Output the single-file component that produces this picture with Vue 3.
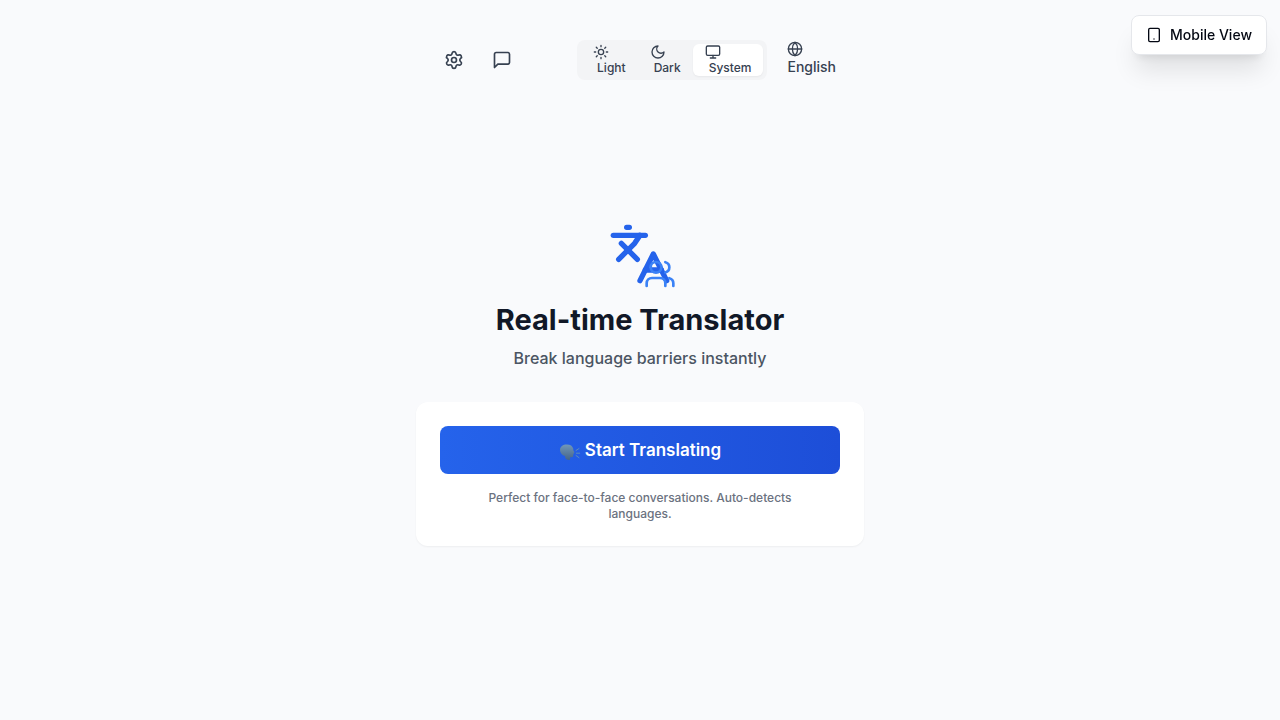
<script setup>
import { ref } from 'vue'

const theme = ref('system')
const themes = [
  { id: 'light', label: 'Light' },
  { id: 'dark', label: 'Dark' },
  { id: 'system', label: 'System' }
]
</script>

<template>
  <div class="page">
    <button type="button" class="mobile-view">
      <svg class="icon-sm" viewBox="0 0 24 24" aria-hidden="true">
        <rect width="16" height="20" x="4" y="2" rx="2" />
        <path d="M12 18h.01" />
      </svg>
      <span>Mobile View</span>
    </button>

    <header class="toolbar">
      <div class="tools">
        <button type="button" class="tool" aria-label="Settings">
          <svg class="icon-md" viewBox="0 0 24 24" aria-hidden="true">
            <path d="M9.671 4.136a2.34 2.34 0 0 1 4.659 0 2.34 2.34 0 0 0 3.319 1.915 2.34 2.34 0 0 1 2.33 4.033 2.34 2.34 0 0 0 0 3.831 2.34 2.34 0 0 1-2.33 4.033 2.34 2.34 0 0 0-3.319 1.915 2.34 2.34 0 0 1-4.659 0 2.34 2.34 0 0 0-3.32-1.915 2.34 2.34 0 0 1-2.33-4.033 2.34 2.34 0 0 0 0-3.831A2.34 2.34 0 0 1 6.35 6.051a2.34 2.34 0 0 0 3.319-1.915" />
            <circle cx="12" cy="12" r="3" />
          </svg>
        </button>
        <button type="button" class="tool" aria-label="Messages">
          <svg class="icon-md" viewBox="0 0 24 24" aria-hidden="true">
            <path d="M21 15a2 2 0 0 1-2 2H7l-4 4V5a2 2 0 0 1 2-2h14a2 2 0 0 1 2 2z" />
          </svg>
        </button>
      </div>

      <div class="preferences">
        <div class="themes" role="group" aria-label="Theme">
          <button
            v-for="item in themes"
            :key="item.id"
            type="button"
            class="theme"
            :class="{ active: theme === item.id }"
            :aria-pressed="theme === item.id"
            @click="theme = item.id"
          >
            <svg class="icon-sm" viewBox="0 0 24 24" aria-hidden="true">
              <template v-if="item.id === 'light'">
                <circle cx="12" cy="12" r="4" />
                <path d="M12 2v2M12 20v2M4.93 4.93l1.41 1.41M17.66 17.66l1.41 1.41M2 12h2M20 12h2M6.34 17.66l-1.41 1.41M19.07 4.93l-1.41 1.41" />
              </template>
              <path v-else-if="item.id === 'dark'" d="M12 3a6 6 0 0 0 9 9 9 9 0 1 1-9-9Z" />
              <template v-else>
                <rect width="20" height="14" x="2" y="3" rx="2" />
                <path d="M8 21h8M12 17v4" />
              </template>
            </svg>
            <span class="theme-label">{{ item.label }}</span>
          </button>
        </div>
        <button type="button" class="language">
          <svg class="icon-sm" viewBox="0 0 24 24" aria-hidden="true">
            <circle cx="12" cy="12" r="10" />
            <path d="M12 2a14.5 14.5 0 0 0 0 20 14.5 14.5 0 0 0 0-20M2 12h20" />
          </svg>
          <span>English</span>
        </button>
      </div>
    </header>

    <main class="main">
      <div class="logo">
        <svg class="logo-languages" viewBox="0 0 24 24" aria-hidden="true">
          <path d="m5 8 6 6" />
          <path d="m4 14 6-6 2-3" />
          <path d="M2 5h12" />
          <path d="M7 2h1" />
          <path d="m22 22-5-10-5 10" />
          <path d="M14 18h6" />
        </svg>
        <svg class="logo-users" viewBox="0 0 24 24" aria-hidden="true">
          <path d="M16 21v-2a4 4 0 0 0-4-4H6a4 4 0 0 0-4 4v2" />
          <circle cx="9" cy="7" r="4" />
          <path d="M22 21v-2a4 4 0 0 0-3-3.87" />
          <path d="M16 3.13a4 4 0 0 1 0 7.75" />
        </svg>
      </div>
      <h1>Real-time Translator</h1>
      <p class="tagline">Break language barriers instantly</p>

      <section class="card">
        <button type="button" class="start">
          <svg class="speaking" viewBox="0 0 22 18" aria-hidden="true">
            <defs>
              <linearGradient id="head" x1="0" y1="0" x2="0" y2="1">
                <stop offset="0" stop-color="#7197b8" />
                <stop offset="1" stop-color="#456589" />
              </linearGradient>
            </defs>
            <path fill="url(#head)" d="M1 7C1 3.500 4 1.500 7.800 1.500c3.600 0 5.800 1.600 6.400 4.100l.2 1.900 1.200 1.700-.9.700.1 1.200-.7.600.1 1.700c-.3.800-1.400.8-2.800.7L11 16.700c-1.800.5-3.600-.1-4.500-1.200L6 13C3 12.300 1 10 1 7Z" />
            <path class="voice" d="m17 7.500 3-2M17.300 10.200h3.400M17 12.500l3 2.200" />
          </svg>
          <span>Start Translating</span>
        </button>
        <p class="hint">Perfect for face-to-face conversations. Auto-detects languages.</p>
      </section>
    </main>
  </div>
</template>

<style>
body {
  background: #f9fafb;
}
</style>

<style scoped>
.page {
  box-sizing: border-box;
  display: flex;
  flex-direction: column;
  align-items: center;
  min-height: 100vh;
  padding: 40px 16px;
  background: #f9fafc;
  color: #111827;
  font-family: Inter, "Liberation Sans", sans-serif;
}

h1,
p {
  margin: 0;
}

button {
  border: 0;
  margin: 0;
  background: transparent;
  color: #374151;
  font-family: inherit;
  font-weight: 500;
  cursor: pointer;
}

svg {
  display: block;
  fill: none;
  stroke: currentColor;
  stroke-width: 2;
  stroke-linecap: round;
  stroke-linejoin: round;
}

.icon-sm {
  width: 16px;
  height: 16px;
}

.icon-md {
  width: 20px;
  height: 20px;
}

.mobile-view {
  position: fixed;
  top: 15px;
  right: 13px;
  display: flex;
  align-items: center;
  gap: 8px;
  height: 40px;
  padding: 0 14px;
  border: 1px solid #e5e7eb;
  border-radius: 8px;
  background: #fff;
  color: #030712;
  font-size: 14px;
  line-height: 20px;
  box-shadow: 0 20px 25px -5px rgb(0 0 0 / 0.1), 0 8px 10px -6px rgb(0 0 0 / 0.1);
}

.toolbar {
  display: flex;
  align-items: center;
  justify-content: space-between;
  width: 100%;
  max-width: 416px;
  margin-bottom: 8px;
}

.tools {
  display: flex;
  gap: 4px;
}

.tool {
  padding: 8px 12px;
}

.preferences {
  display: flex;
  align-items: center;
  gap: 8px;
}

.themes {
  display: flex;
  padding: 4px;
  border-radius: 8px;
  background: #f3f4f6;
}

.theme {
  padding: 0 12px;
  border-radius: 6px;
  font-size: 12px;
  line-height: 16px;
}

.theme.active {
  background: #fff;
  box-shadow: 0 1px 2px rgb(0 0 0 / 0.05);
}

.theme-label {
  display: block;
  margin-left: 4px;
}

.language {
  padding: 0 12px 2px;
  font-size: 14px;
  line-height: 20px;
}

.main {
  display: flex;
  flex: 1;
  flex-direction: column;
  align-items: center;
  justify-content: center;
  width: 100%;
  max-width: 448px;
  text-align: center;
}

.logo {
  position: relative;
  margin-bottom: 16px;
}

.logo-languages {
  width: 64px;
  height: 64px;
  color: #2563eb;
}

.logo-users {
  position: absolute;
  right: -4px;
  bottom: -4px;
  width: 32px;
  height: 32px;
  color: #3b82f6;
}

h1 {
  margin-bottom: 8px;
  font-size: 29px;
  font-weight: 700;
  line-height: 36px;
}

.tagline {
  margin-bottom: 32px;
  color: #4b5563;
  font-size: 16px;
  font-weight: 500;
  line-height: 24px;
}

.card {
  box-sizing: border-box;
  width: 100%;
  padding: 24px;
  border-radius: 12px;
  background: #fff;
  box-shadow: 0 1px 2px rgb(0 0 0 / 0.05);
}

.start {
  display: flex;
  align-items: center;
  justify-content: center;
  gap: 4px;
  width: 100%;
  height: 48px;
  border-radius: 8px;
  background: linear-gradient(90deg, #2563eb, #1d4ed8);
  color: #fff;
  font-size: 17px;
  font-weight: 600;
  line-height: 28px;
}

.speaking {
  width: 22px;
  height: 18px;
  margin-top: 4px;
  stroke: none;
}

.voice {
  stroke: #5c8dbb;
  stroke-width: 1;
}

.hint {
  max-width: 336px;
  margin: 16px auto 0;
  color: #6b7280;
  font-size: 12px;
  font-weight: 500;
  line-height: 16px;
}
</style>
